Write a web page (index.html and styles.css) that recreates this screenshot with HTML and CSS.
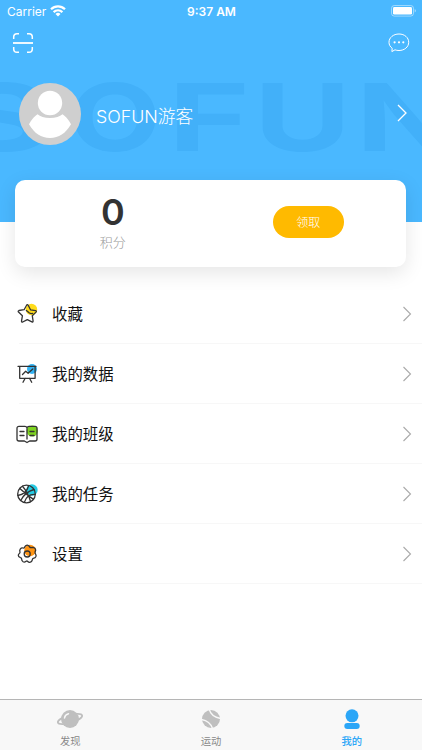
FILE: index.html
```html
<!DOCTYPE html>
<html lang="zh-CN">
<head>
  <meta charset="UTF-8">
  <meta name="viewport" content="width=device-width, initial-scale=1">
  <title>我的</title>
  <link rel="stylesheet" href="styles.css">
</head>
<body>
  <div class="page">
    <div class="header">
      <svg class="header-mark" width="422" height="222" viewBox="0 0 422 222">
        <text x="-50" y="151" textLength="103" lengthAdjust="spacingAndGlyphs">S</text>
        <text x="69" y="151" textLength="92" lengthAdjust="spacingAndGlyphs">O</text>
        <text x="168" y="151" textLength="82" lengthAdjust="spacingAndGlyphs">F</text>
        <text x="254" y="151" textLength="97" lengthAdjust="spacingAndGlyphs">U</text>
        <text x="356" y="151" textLength="101" lengthAdjust="spacingAndGlyphs">N</text>
      </svg>
      <div class="status-bar">
        <div class="carrier">
          <span>Carrier</span>
          <svg width="16" height="12" viewBox="0 0 16 12" fill="none" stroke="#fff" stroke-width="2.2">
            <path d="M1 4.3C5 .3 11 .3 15 4.3"/>
            <path d="M3.6 7.1C6.2 4.6 9.8 4.6 12.4 7.1"/>
            <path d="M8 11.4L5.5 8.9Q8 6.7 10.5 8.9Z" fill="#fff" stroke="none"/>
          </svg>
        </div>
        <div class="time">9:37 AM</div>
        <div class="battery">
          <svg width="25" height="12" viewBox="0 0 25 12">
            <rect x=".5" y=".5" width="22" height="10.6" rx="2.8" fill="none" stroke="#fff" stroke-opacity=".45"/>
            <rect x="2" y="2" width="19" height="7.6" rx="1.4" fill="#fff"/>
            <path d="M23.7 4v3.6q1.2-.6 1.2-1.8T23.7 4z" fill="#fff" fill-opacity=".5"/>
          </svg>
        </div>
      </div>
      <div class="toolbar">
        <svg width="22" height="22" viewBox="0 0 22 22" fill="none" stroke="#fff" stroke-width="1.5">
          <path d="M1.7 7V5Q1.7 1.7 5 1.7H7M15 1.7h2Q20.3 1.7 20.3 5v2M20.3 15v2q0 3.3-3.3 3.3h-2M7 20.3H5Q1.7 20.3 1.7 17v-2"/>
          <path d="M1 11h20" stroke-width="1.8"/>
        </svg>
        <svg width="22" height="20" viewBox="0 0 22 20" fill="none" stroke="#fff" stroke-width="1">
          <path d="M4.2 15.3C2 13.7 1 11.6 1 9.3 1 4.6 5.4 1 11 1s9.7 3.6 9.7 8.3-4.3 8.2-9.7 8.2c-1.5 0-2.9-.2-4-.7L3.9 18.6Z"/>
          <g fill="#fff" stroke="none">
            <circle cx="6.6" cy="9.3" r="1.1"/>
            <circle cx="11" cy="9.3" r="1.1"/>
            <circle cx="15.3" cy="9.3" r="1.1"/>
          </g>
        </svg>
      </div>
      <div class="profile">
        <svg class="avatar" width="62" height="62" viewBox="0 0 62 62">
          <circle cx="31" cy="31" r="31" fill="#cfcfcf"/>
          <circle cx="31" cy="20" r="12.2" fill="#fff"/>
          <path d="M18.5 31.3Q22.500 35 31 35t12.500-3.700Q48 34 52 41.300C46.500 50.500 40 55 31 55S15.500 50.500 10 41.300Q14 34 18.500 31.300Z" fill="#fff"/>
        </svg>
        <div class="name">SOFUN游客</div>
        <svg class="profile-arrow" width="10" height="18" viewBox="0 0 10 18" fill="none" stroke="#fff" stroke-width="1.3">
          <path d="M1 1l8 8-8 8"/>
        </svg>
      </div>
    </div>

    <div class="card">
      <div class="points">
        <div class="points-num">0</div>
        <div class="points-label">积分</div>
      </div>
      <div class="card-action">
        <button class="get-button">领取</button>
      </div>
    </div>

    <div class="menu">
      <div class="menu-item">
        <svg class="menu-icon" width="24" height="24" viewBox="0 0 24 24">
          <circle cx="15.5" cy="7.5" r="5.7" fill="#ffdc1a"/>
          <path d="M10.600 3.200q.8-1.200 1.600.1l2.300 4.500 5.100.8q1.300.4.400 1.500l-3.700 3.700.8 5.200q0 1.300-1.200.9l-4.600-2.300-4.600 2.400q-1.300.3-1.200-.9l.9-5.300-3.900-3.800q-.8-1.100.4-1.500l5.200-.8Z"/>
          <path d="M10.400 8.400l3 2.600q1.500.8 3.200.4"/>
        </svg>
        <div class="menu-text">收藏</div>
        <svg class="arrow" width="10" height="16" viewBox="0 0 10 16"><path d="M1.500 1l7 7-7 7"/></svg>
      </div>
      <div class="menu-item">
        <svg class="menu-icon" width="24" height="24" viewBox="0 0 24 24">
          <circle cx="16" cy="7" r="5" fill="#32b4f5"/>
          <path d="M2 4.300h18M3.700 4.300v12h15.400v-12M9.200 16.300L7 20.300M13.500 16.300l2.200 4"/>
          <path d="M6.500 12.500l3.200-3.300 2.400 2 4.700-4.300"/>
        </svg>
        <div class="menu-text">我的数据</div>
        <svg class="arrow" width="10" height="16" viewBox="0 0 10 16"><path d="M1.500 1l7 7-7 7"/></svg>
      </div>
      <div class="menu-item">
        <svg class="menu-icon" width="24" height="24" viewBox="0 0 24 24">
          <circle cx="16.300" cy="9" r="5.600" fill="#7ed321"/>
          <path d="M11 5.800Q10.400 4.400 9 4.400H3Q1 4.400 1 6.300v10.900Q1 19 3 19h5.400L11 20.500 13.600 19h5.500q1.900 0 1.900-1.800V6.300q0-1.900-1.900-1.900H13Q11.600 4.400 11 5.800V17"/>
          <path d="M4 9.500h4M4 13.500h4M14 9.500h4M14 13.500h4"/>
        </svg>
        <div class="menu-text">我的班级</div>
        <svg class="arrow" width="10" height="16" viewBox="0 0 10 16"><path d="M1.500 1l7 7-7 7"/></svg>
      </div>
      <div class="menu-item">
        <svg class="menu-icon" width="24" height="24" viewBox="0 0 24 24">
          <circle cx="16" cy="8" r="5.700" fill="#25cbe4"/>
          <circle cx="10.500" cy="12" r="8.800"/>
          <path d="M6.500 4.200q6 6.800 8 15.500M3.800 6.500q6.500 6 13.700 10.900M18 7.500Q9 10 4.700 18.500M12.800 3.500Q10 12.500 1.800 13.500M19.200 12.500Q11 12 8.300 20.400"/>
        </svg>
        <div class="menu-text">我的任务</div>
        <svg class="arrow" width="10" height="16" viewBox="0 0 10 16"><path d="M1.500 1l7 7-7 7"/></svg>
      </div>
      <div class="menu-item">
        <svg class="menu-icon" width="24" height="24" viewBox="0 0 24 24">
          <circle cx="14" cy="8.500" r="5.800" fill="#ff9413"/>
          <path d="M9.700 3.700q1.500-1 3 0L13.700 5q.8 1 2 .5l1.500-.2q2.300.4 2.500 2.700l-.6 2q-.3 1.200.5 2.200.8 1 .3 2.300-.7 1.600-2 1.700-1.300.2-1.500 1.300-.4 2.600-2.600 2.800-1.200.1-2-.8-.8-.9-1.700-.2-1.600 1.300-3 .5-1.600-1-1.400-2.600 0-1.200-1.200-1.500Q2.200 15 2.300 13.300q.1-1.200 1.100-1.800.9-.7.500-1.700-.6-1.600.5-3 1.100-1.300 2.700-.8 1 .3 1.500-.8Z"/>
          <circle cx="11.200" cy="12" r="3"/>
        </svg>
        <div class="menu-text">设置</div>
        <svg class="arrow" width="10" height="16" viewBox="0 0 10 16"><path d="M1.500 1l7 7-7 7"/></svg>
      </div>
    </div>

    <div class="tab-bar">
      <div class="tab">
        <svg width="28" height="22" viewBox="0 0 28 22">
          <ellipse cx="14" cy="11" rx="12.600" ry="3.800" transform="rotate(-16 14 11)" fill="none" stroke="#bfbfbf" stroke-width="1.800"/>
          <circle cx="14" cy="11" r="9" fill="#bfbfbf"/>
          <path d="M8.500 10q.5-3.500 4-4.300" fill="none" stroke="#f8f8f8" stroke-width="1.500" stroke-linecap="round"/>
        </svg>
        <span>发现</span>
      </div>
      <div class="tab">
        <svg width="28" height="22" viewBox="0 0 28 22">
          <circle cx="14" cy="11" r="9" fill="#bfbfbf"/>
          <path d="M12.300 1.500Q14 8.500 23.500 10.500M4.500 11.500Q13 13 15.500 20.500" fill="none" stroke="#f8f8f8" stroke-width="1.300"/>
        </svg>
        <span>运动</span>
      </div>
      <div class="tab active">
        <svg width="28" height="22" viewBox="0 0 28 22">
          <circle cx="14" cy="7.800" r="6.500" fill="#2ba6f7"/>
          <rect x="6.300" y="15" width="15.400" height="6" rx="3" fill="#2ba6f7"/>
        </svg>
        <span>我的</span>
      </div>
    </div>
  </div>
</body>
</html>
```
FILE: styles.css
```css
html, body {
  height: 100%;
  margin: 0;
  padding: 0;
}

body {
  font-family: Inter, "Noto Sans CJK SC", sans-serif;
  background-color: #fff;
  overflow: hidden;
}

svg {
  display: block;
  flex-shrink: 0;
}

.page {
  display: flex;
  flex-direction: column;
  height: 100%;
}

.header {
  position: relative;
  flex: 0 0 222px;
  background-color: #4ab8ff;
  color: #fff;
  overflow: hidden;
}

/* big faded lettering behind the profile */
.header-mark {
  position: absolute;
  top: 0;
  left: 0;
  fill: #42b0f9;
  font-size: 93.5px;
  font-weight: 700;
}

.status-bar,
.toolbar,
.profile {
  position: relative;
  display: flex;
  align-items: center;
}

.status-bar {
  height: 22px;
  padding: 0 6px 0 7px;
  font-size: 12px;
}

.carrier {
  flex: 1;
  display: flex;
  align-items: center;
  gap: 4px;
}

.time {
  font-weight: 600;
}

.battery {
  flex: 1;
  display: flex;
  justify-content: flex-end;
}

.battery svg {
  margin-top: -1px;
}

.toolbar {
  justify-content: space-between;
  height: 42px;
  padding: 0 12px;
}

.profile {
  padding: 19px 15px 0 19px;
}

.profile-arrow {
  margin-top: -3px;
}

.name {
  flex: 1;
  margin: 2px 0 0 15px;
  font-size: 17.8px;
  font-weight: 300;
}

.card {
  position: relative;
  display: flex;
  align-items: center;
  flex: 0 0 87px;
  margin: -42px 16px 0 15px;
  background-color: #fff;
  border-radius: 10px;
  box-shadow: 0 6px 20px rgba(0, 0, 0, 0.1);
}

.points,
.card-action {
  flex: 1;
  display: flex;
  flex-direction: column;
  align-items: center;
}

.points {
  margin-top: -6px;
}

.points-num {
  font-size: 36px;
  font-weight: 600;
  line-height: 42px;
  color: #333;
}

.points-label {
  font-size: 13px;
  font-weight: 300;
  line-height: 18px;
  color: #999;
}

.get-button {
  width: 71px;
  height: 32px;
  margin-top: -3px;
  padding: 0 0 2px;
  border: none;
  border-radius: 16px;
  background-color: #ffba00;
  color: #fff;
  font-family: inherit;
  font-size: 12px;
  font-weight: 300;
}

.menu {
  margin: 17px 0 0 19px;
}

.menu-item {
  display: flex;
  align-items: center;
  box-sizing: border-box;
  height: 60px;
  padding-right: 10px;
  border-bottom: 1px solid #f7f7f7;
}

.menu-icon {
  margin-left: -3px;
  fill: none;
  stroke: none;
}

.menu-icon path,
.menu-icon circle:not([fill]) {
  stroke: #333;
  stroke-width: 1.3;
  stroke-linecap: round;
  stroke-linejoin: round;
}

.menu-text {
  flex: 1;
  margin: -2px 0 0 12px;
  font-size: 15.4px;
  color: #111;
}

.arrow {
  fill: none;
  stroke: #aaa;
  stroke-width: 1.1;
}

.tab-bar {
  display: flex;
  box-sizing: border-box;
  height: 51px;
  margin-top: auto;
  border-top: 1px solid #b5b5b5;
  background-color: #f8f8f8;
}

.tab {
  flex: 1;
  display: flex;
  flex-direction: column;
  align-items: center;
  padding-top: 8px;
  font-size: 10.3px;
  line-height: 15px;
  color: #888;
}

.tab span {
  margin-top: 4px;
}

.tab.active {
  color: #2ba6f7;
  font-weight: 500;
}
```
